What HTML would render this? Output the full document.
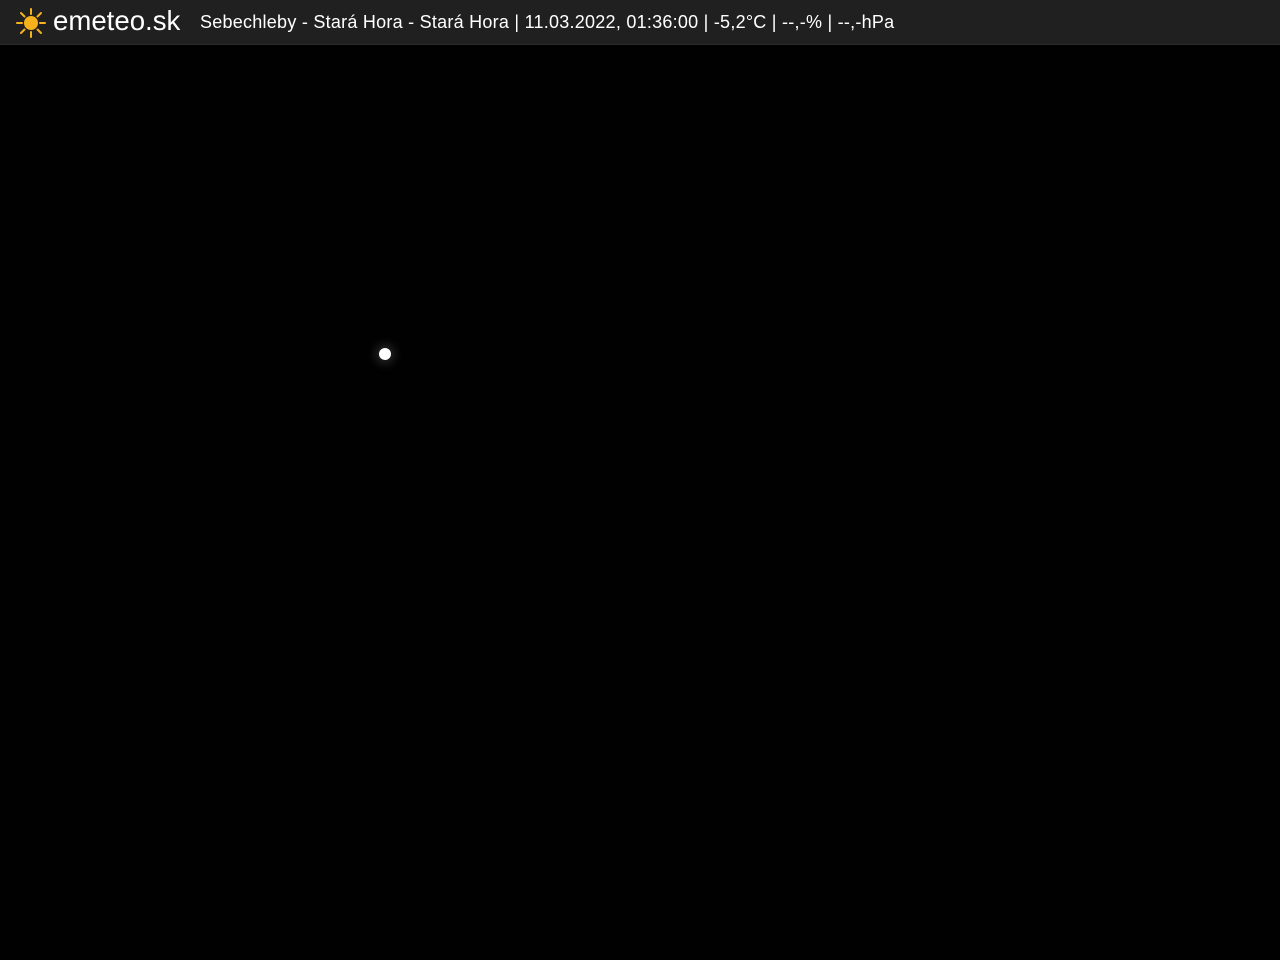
<!DOCTYPE html>
<html><head><style>
body{margin:0;width:1280px;height:960px;background:#010101;overflow:hidden;font-family:"Liberation Sans",sans-serif}
.bar{position:absolute;left:0;top:0;width:1280px;height:44px;background:#202020;border-bottom:1px solid #2a2a2a}
.logo{position:absolute;left:53px;top:5px;color:#fff;font-size:27.6px}
.t{position:absolute;left:200px;top:12px;color:#fff;font-size:18px;white-space:nowrap;letter-spacing:0.25px}
.moon{position:absolute;left:379px;top:348px;width:12px;height:12px;border-radius:50%;background:#fff;box-shadow:0 0 10px 4px rgba(255,255,255,0.15)}
</style></head><body>
<div class="bar">
<svg style="position:absolute;left:15px;top:7px" width="32" height="32" viewBox="0 0 32 32">
<g stroke="#f6b21c" stroke-width="2" stroke-linecap="round">
<line x1="16" y1="2" x2="16" y2="7"/><line x1="16" y1="25" x2="16" y2="30"/>
<line x1="2" y1="16" x2="7" y2="16"/><line x1="25" y1="16" x2="30" y2="16"/>
<line x1="6" y1="6" x2="9.5" y2="9.5"/><line x1="22.5" y1="22.5" x2="26" y2="26"/>
<line x1="26" y1="6" x2="22.5" y2="9.5"/><line x1="9.5" y1="22.5" x2="6" y2="26"/>
</g><circle cx="16" cy="16" r="7" fill="#f6b21c"/></svg>
<div class="logo">emeteo.sk</div>
<div class="t">Sebechleby - Stará Hora - Stará Hora | 11.03.2022, 01:36:00 | -5,2°C | --,-% | --,-hPa</div>
</div>
<div class="moon"></div>
</body></html>
